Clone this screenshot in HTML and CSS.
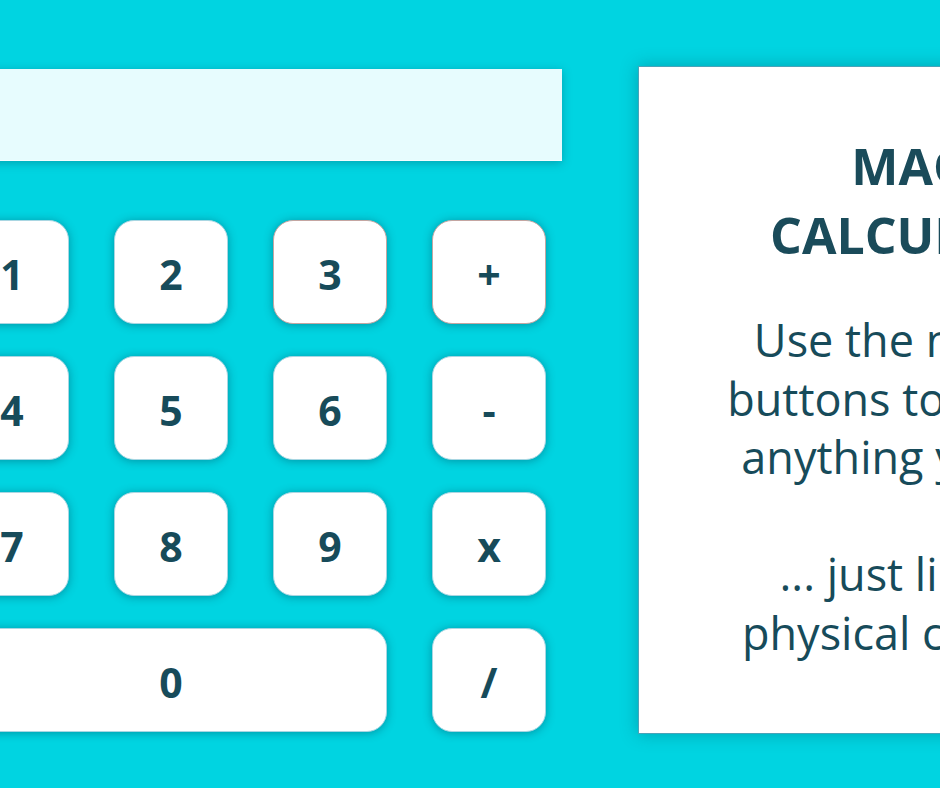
FILE: index.html
```html
<!DOCTYPE html>
<html lang="en">
<head>
<meta charset="utf-8">
<title>Magic Calculator</title>
<link rel="stylesheet" href="styles.css">
</head>
<body>
<main class="page">
  <section class="calculator">
    <div class="display"></div>
    <div class="keypad">
      <button class="key">1</button>
      <button class="key">2</button>
      <button class="key key-warm">3</button>
      <button class="key key-warm">+</button>
      <button class="key">4</button>
      <button class="key">5</button>
      <button class="key">6</button>
      <button class="key">-</button>
      <button class="key">7</button>
      <button class="key">8</button>
      <button class="key">9</button>
      <button class="key">x</button>
      <button class="key key-zero">0</button>
      <button class="key">/</button>
    </div>
  </section>
  <aside class="info">
    <h1 class="info-title">Magic Calculator</h1>
    <p class="info-text">Use the numbers<br>buttons to calculate<br>anything you want</p>
    <p class="info-text info-text-gap">... just like on a<br>physical calculator</p>
  </aside>
</main>
</body>
</html>
```
FILE: styles.css
```css
html, body {
  margin: 0;
  padding: 0;
}

body {
  width: 940px;
  height: 788px;
  overflow: hidden;
  background: #00d4e1;
  font-family: "Open Sans", "Noto Sans", sans-serif;
  color: #174b5a;
}

.page {
  display: flex;
  align-items: flex-start;
  margin-left: -60px;
  padding-top: 66px;
}

.calculator {
  flex: 0 0 622px;
  display: flex;
  flex-direction: column;
  margin-top: 3px;
}

.display {
  height: 91px;
  background: #e7fcfe;
  border-bottom: 1px solid #f4feff;
  box-shadow: 0 2px 9px rgba(0, 70, 90, 0.35);
}

.keypad {
  margin-top: 59px;
  margin-left: 15px;
  display: grid;
  grid-template-columns: repeat(4, 114px);
  grid-auto-rows: 104px;
  column-gap: 45px;
  row-gap: 32px;
}

.key {
  margin: 0;
  padding: 5px 0 0;
  background: #fff;
  border: 1px solid #a9d6e2;
  border-radius: 20px;
  box-shadow: 0 1px 10px rgba(0, 70, 90, 0.45);
  font-family: "Open Sans", "Noto Sans", sans-serif;
  font-weight: 700;
  font-size: 41px;
  line-height: 1;
  color: #174b5a;
}

.key-warm {
  border-color: #c4a6a2;
}

.key-zero {
  grid-column: span 3;
}

.info {
  flex: 0 0 592px;
  box-sizing: border-box;
  height: 668px;
  margin-left: 76px;
  padding: 65px 60px 0;
  background: #fff;
  border: 1px solid #4aa3b8;
  border-right: none;
  box-shadow: 0 0 16px rgba(0, 70, 90, 0.35);
  text-align: center;
}

.info-title {
  margin: 0;
  font-size: 50px;
  line-height: 69px;
  font-weight: 700;
  text-transform: uppercase;
  color: #1a4b5a;
}

.info-text {
  margin: 41px 0 0;
  font-size: 45px;
  line-height: 58.5px;
  font-weight: 400;
}

.info-text-gap {
  margin-top: 58.5px;
}
```
